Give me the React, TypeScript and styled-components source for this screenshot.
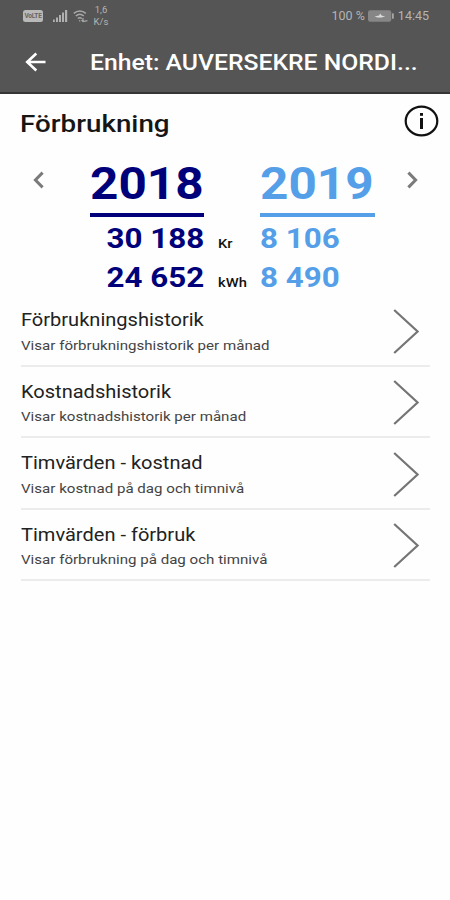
import React from "react";
import styled, { createGlobalStyle } from "styled-components";

const GlobalStyle = createGlobalStyle`
  * { box-sizing: border-box; }
  body { margin: 0; background: #fff; font-family: Roboto, "Liberation Sans", sans-serif; }
`;

const Screen = styled.main`
  width: 450px;
  height: 900px;
  overflow: hidden;
  background: #fefefe;
`;

/* Wide lettering: the face is stretched horizontally from its leading edge. */
const Wide = styled.span<{ $x: number; $origin?: string }>`
  display: inline-block;
  white-space: nowrap;
  transform: scaleX(${(p) => p.$x});
  transform-origin: ${(p) => p.$origin ?? "left"} center;
`;

const Header = styled.header`
  height: 94px;
  background: #555;
  border-bottom: 2px solid #363636;
`;

const StatusBar = styled.div`
  display: flex;
  align-items: center;
  height: 31px;
  padding: 0 21px 0 23px;
  color: #b4b4b4;
  font-size: 12.5px;
`;

const VolteBadge = styled.span`
  display: flex;
  align-items: center;
  justify-content: center;
  width: 20px;
  height: 12px;
  margin-right: 10px;
  border-radius: 2.5px;
  background: #b9b9b9;
  color: #666;
  font-size: 6.5px;
  font-weight: 700;
  letter-spacing: -0.2px;
`;

const Radios = styled.span`
  display: flex;
  gap: 5px;
`;

const NetworkRate = styled.span`
  display: flex;
  flex-direction: column;
  align-items: center;
  width: 14px;
  margin-left: 6px;
  font-size: 9.5px;
  line-height: 12px;
`;

const StatusEnd = styled.div`
  display: flex;
  align-items: center;
  margin-left: auto;
  svg { margin: 0 4px 0 3px; }
`;

const TitleBar = styled.div`
  display: flex;
  align-items: center;
  height: 62px;
  padding-left: 25px;
`;

const Title = styled.h1`
  margin: 0 0 0 43px;
  color: #fff;
  font-size: 22.5px;
  font-weight: 500;
  line-height: 26px;
`;

const SectionHead = styled.div`
  display: flex;
  align-items: center;
  justify-content: space-between;
  height: 58px;
  padding: 0 11px 4px 20px;
`;

const SectionTitle = styled.h2`
  margin: 6px 0 0;
  color: #161616;
  font-size: 24.4px;
  font-weight: 500;
  line-height: 28px;
`;

const Comparison = styled.section`
  display: grid;
  grid-template-columns: 90px 114px 56px 115px 1fr;
  grid-template-rows: 65px 39px 39px;
`;

const Year = styled.div<{ $color: string }>`
  height: 65px;
  padding-top: 7px;
  border-bottom: 4px solid ${(p) => p.$color};
  color: ${(p) => p.$color};
  font-size: 45px;
  font-weight: 700;
  line-height: 50px;
`;

const Stepper = styled.button<{ $pad: number }>`
  display: flex;
  align-items: flex-start;
  padding: 19px 0 0 ${(p) => p.$pad}px;
  border: 0;
  background: none;
`;

const Amount = styled.div<{ $color: string; $end?: boolean }>`
  display: flex;
  justify-content: ${(p) => (p.$end ? "flex-end" : "flex-start")};
  padding-top: 1px;
  color: ${(p) => p.$color};
  font-size: 28px;
  font-weight: 700;
  line-height: 42px;
`;

const Unit = styled.div`
  padding: 6px 0 0 14px;
  color: #111;
  font-size: 12.8px;
  font-weight: 500;
  line-height: 42px;
`;

const List = styled.ul`
  margin: 0;
  padding: 0 20px 0 21px;
  list-style: none;
`;

const Row = styled.li`
  display: flex;
  justify-content: space-between;
  height: 71.6px;
  border-bottom: 2px solid #ececec;
`;

const RowText = styled.div`
  display: flex;
  flex-direction: column;
  padding-top: 13px;
`;

const RowTitle = styled.div`
  color: #222;
  font-size: 18.5px;
  line-height: 24px;
`;

const RowDetail = styled.div`
  margin-top: 2.5px;
  color: #444;
  font-size: 13.3px;
  line-height: 22px;
`;

const Chevron = styled.svg`
  width: 28px;
  height: 48px;
  margin: 11.5px 10px 0 0;
`;

const navy = "#00007a";
const blue = "#559fe8";

const rows = [
  ["Förbrukningshistorik", "Visar förbrukningshistorik per månad"],
  ["Kostnadshistorik", "Visar kostnadshistorik per månad"],
  ["Timvärden - kostnad", "Visar kostnad på dag och timnivå"],
  ["Timvärden - förbruk", "Visar förbrukning på dag och timnivå"],
];

const Signal = () => (
  <svg width="15" height="14" viewBox="0 0 15 14" fill="#b0b0b0">
    <rect x="0" y="10.5" width="1.8" height="2.5" />
    <rect x="3" y="8.5" width="2" height="4.5" />
    <rect x="6" y="6" width="2" height="7" />
    <rect x="9" y="3.5" width="2" height="9.5" />
    <rect x="12" y="1" width="2.2" height="12" />
  </svg>
);

const Wifi = () => (
  <svg width="15" height="14" viewBox="0 0 15 14" fill="none" stroke="#a8a8a8" strokeWidth="1.5">
    <path d="M.8 4.4C4.3 1.1 9.2 1.1 12.8 4.4M2.8 7c2.5-2.2 5.5-2.2 8 0M4.8 9.5c1.3-1.1 2.7-1.1 4 0" />
    <path d="M6.2 11.3l1 1M10 9v3.6M8.6 11l1.4 1.6L14.4 11.6" strokeWidth="1.2" />
  </svg>
);

const Battery = () => (
  <svg width="26" height="12" viewBox="0 0 26 12">
    <rect x="0" y="0.3" width="23.3" height="11.4" rx="2.2" fill="#868686" />
    <rect x="24" y="3.2" width="1.8" height="5.6" rx=".6" fill="#a6a6a6" />
    <path d="M6.5 6.4l4.6-.8 1.2-2 1.2 2 3.6.8-3.6 1H9.5z" fill="#dadada" />
  </svg>
);

export default function App() {
  return (
    <>
      <GlobalStyle />
      <Screen>
        <Header>
          <StatusBar>
            <VolteBadge>VoLTE</VolteBadge>
            <Radios>
              <Signal />
              <Wifi />
            </Radios>
            <NetworkRate>
              <span>1,6</span>
              <span>K/s</span>
            </NetworkRate>
            <StatusEnd>
              <span>100 %</span>
              <Battery />
              <span>14:45</span>
            </StatusEnd>
          </StatusBar>
          <TitleBar>
            <svg width="22" height="20" viewBox="0 0 22 20" fill="none" stroke="#fff" strokeWidth="2.6">
              <path d="M20.5 10H2.5M11.3 1.5L2.2 10l9.1 8.5" />
            </svg>
            <Title>
              <Wide $x={1.099}>Enhet: AUVERSEKRE NORDI...</Wide>
            </Title>
          </TitleBar>
        </Header>

        <SectionHead>
          <SectionTitle>
            <Wide $x={1.138}>Förbrukning</Wide>
          </SectionTitle>
          <svg width="35" height="32" viewBox="0 0 35 32">
            <ellipse cx="17.5" cy="16" rx="15.8" ry="14.4" fill="none" stroke="#111" strokeWidth="2.2" />
            <rect x="16" y="13" width="3" height="11" fill="#111" />
            <rect x="16" y="8" width="3" height="2.8" fill="#111" />
          </svg>
        </SectionHead>

        <Comparison>
          <Stepper $pad={33} aria-label="Föregående år">
            <svg width="11" height="18" viewBox="0 0 11 18" fill="none" stroke="#7b7b7b" strokeWidth="3">
              <path d="M9.6 1.6L2.4 9l7.2 7.4" />
            </svg>
          </Stepper>
          <Year $color={navy}>
            <Wide $x={1.1}>2018</Wide>
          </Year>
          <div />
          <Year $color={blue}>
            <Wide $x={1.1}>2019</Wide>
          </Year>
          <Stepper $pad={32} aria-label="Nästa år">
            <svg width="11" height="18" viewBox="0 0 11 18" fill="none" stroke="#7b7b7b" strokeWidth="3">
              <path d="M1.4 1.6L8.6 9l-7.2 7.4" />
            </svg>
          </Stepper>

          <div />
          <Amount $color={navy} $end>
            <Wide $x={1.12} $origin="right">30 188</Wide>
          </Amount>
          <Unit>
            <Wide $x={1.15}>Kr</Wide>
          </Unit>
          <Amount $color={blue}>
            <Wide $x={1.12}>8 106</Wide>
          </Amount>
          <div />

          <div />
          <Amount $color={navy} $end>
            <Wide $x={1.12} $origin="right">24 652</Wide>
          </Amount>
          <Unit>
            <Wide $x={1.15}>kWh</Wide>
          </Unit>
          <Amount $color={blue}>
            <Wide $x={1.12}>8 490</Wide>
          </Amount>
          <div />
        </Comparison>

        <List>
          {rows.map(([title, detail]) => (
            <Row key={title}>
              <RowText>
                <RowTitle>
                  <Wide $x={1.083}>{title}</Wide>
                </RowTitle>
                <RowDetail>
                  <Wide $x={1.135}>{detail}</Wide>
                </RowDetail>
              </RowText>
              <Chevron viewBox="0 0 28 48" fill="none" stroke="#757575" strokeWidth="2.2">
                <path d="M2.2 3L25.6 24.5 2.2 46" />
              </Chevron>
            </Row>
          ))}
        </List>
      </Screen>
    </>
  );
}
